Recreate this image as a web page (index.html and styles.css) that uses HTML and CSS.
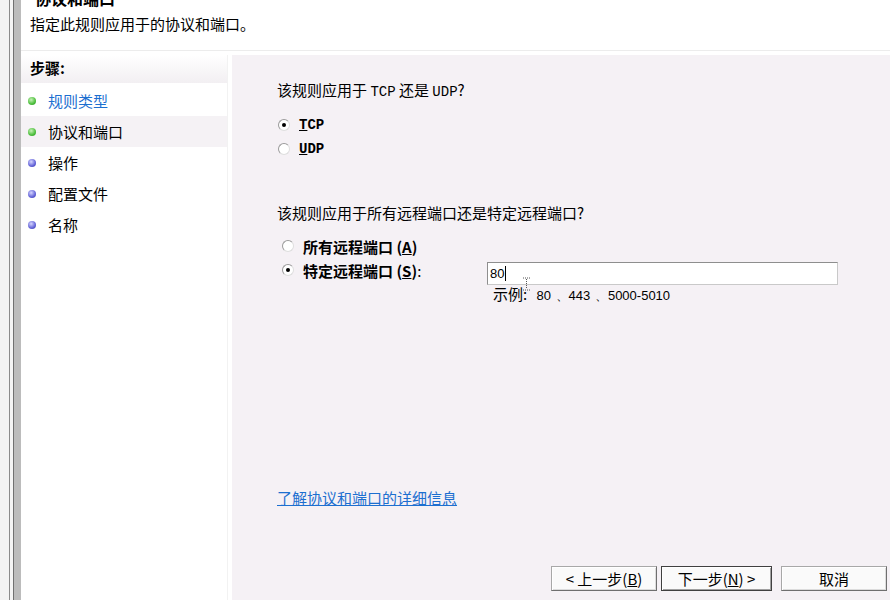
FILE: index.html
```html
<!DOCTYPE html>
<html>
    <head>
        <title>新建入站规则向导 - 协议和端口</title>
        <link rel="stylesheet" href="styles.css">
    </head>
    <body>
        <div class="window">
            <div class="frame-edge">
                <div class="edge-line"></div>
                <div class="edge-bar"></div>
            </div>
            <div class="wizard">
                <div class="header">
                    <div class="title">协议和端口</div>
                    <div class="subtitle">指定此规则应用于的协议和端口。</div>
                </div>
                <div class="body">
                    <div class="steps">
                        <div class="steps-head">步骤:</div>
                        <div class="step first"><span class="dot green"></span><span class="step-link">规则类型</span></div>
                        <div class="step current"><span class="dot green"></span>协议和端口</div>
                        <div class="step"><span class="dot blue"></span>操作</div>
                        <div class="step"><span class="dot blue"></span>配置文件</div>
                        <div class="step"><span class="dot blue"></span>名称</div>
                    </div>
                    <div class="page">
                        <p class="question">该规则应用于 <span class="mono">TCP</span> 还是 <span class="mono">UDP</span>?</p>
                        <div class="options">
                            <label class="option"><span class="radio checked"></span><b class="mono"><u>T</u>CP</b></label>
                            <label class="option"><span class="radio"></span><b class="mono"><u>U</u>DP</b></label>
                        </div>
                        <p class="question second">该规则应用于所有远程端口还是特定远程端口?</p>
                        <div class="options ports">
                            <label class="option"><span class="radio"></span><b>所有远程端口 (<u>A</u>)</b></label>
                            <div class="port-row">
                                <label class="option"><span class="radio checked"></span><b>特定远程端口 (<u>S</u>)</b>:</label>
                                <div class="port-field">
                                    <div class="input">80<span class="caret"></span></div>
                                    <div class="hint">示例: <span class="nums">80 、443 、5000-5010</span></div>
                                    <svg class="ibeam" width="9" height="14" viewBox="0 0 9 14">
                                        <path d="M1 1h3M5 1h3M4.5 2v10M1 13h3M5 13h3" stroke="#555" stroke-width="1" stroke-dasharray="1 1" fill="none"/>
                                    </svg>
                                </div>
                            </div>
                        </div>
                        <a class="more" href="#">了解协议和端口的详细信息</a>
                        <div class="buttons">
                            <button>&lt; 上一步(<u>B</u>)</button>
                            <button class="default">下一步(<u>N</u>) &gt;</button>
                            <button class="cancel">取消</button>
                        </div>
                    </div>
                </div>
            </div>
        </div>
    </body>
</html>
```

FILE: styles.css
```css
body {
    margin: 0;
    background-color: #ffffff;
    font-family: "Noto Sans CJK SC", "Noto Sans", sans-serif;
    font-size: 15px;
    color: #000;
}

.window {
    display: flex;
    width: 890px;
    height: 600px;
    overflow: hidden;
}

/* Left border of the dialog */
.frame-edge {
    display: flex;
    width: 21px;
    background-color: #f4f4f4;
    flex-shrink: 0;
}

.edge-line {
    width: 1px;
    margin-left: 9px;
    background-color: #8c8c8c;
}

.edge-bar {
    width: 7px;
    margin-left: 3px;
    border-left: 1px solid #707070;
    background-color: #bcbcbc;
}

.wizard {
    flex: 1;
    display: flex;
    flex-direction: column;
}

/* Header */
.header {
    height: 51px;
    padding-left: 9px;
    border-bottom: 1px solid #ececec;
    box-sizing: border-box;
}

.title {
    margin-top: -12px;
    margin-left: 5px;
    font-size: 16px;
    font-weight: bold;
    line-height: 20px;
}

.subtitle {
    margin-top: 6px;
    line-height: 20px;
}

.body {
    flex: 1;
    display: flex;
    padding-top: 4px;
}

/* Steps */
.steps {
    width: 206px;
    background-color: #ffffff;
    border-right: 1px solid #f2f2f2;
}

.steps-head {
    height: 28px;
    line-height: 26px;
    padding-left: 9px;
    font-weight: bold;
    background: linear-gradient(#ffffff, #f2eff2);
}

.step {
    display: flex;
    align-items: center;
    height: 31px;
    padding-left: 7px;
}

.step.first {
    margin-top: 2px;
}

.step.current {
    background-color: #f5f2f5;
}

.step-link {
    color: #1c6fd0;
}

.dot {
    width: 8px;
    height: 8px;
    border-radius: 50%;
    margin-right: 12px;
}

.dot.green {
    background: radial-gradient(circle at 40% 35%, #c8f2b8, #4cbf3c 60%, #2f8f2a);
}

.dot.blue {
    background: radial-gradient(circle at 40% 35%, #d6d6ff, #6464d8 60%, #3c3ca8);
}

/* Page */
.page {
    flex: 1;
    display: flex;
    flex-direction: column;
    margin-left: 4px;
    padding: 26px 0 0 45px;
    background-color: #f5f1f5;
}

.question {
    margin: 0;
    line-height: 18px;
}

.question.second {
    margin-top: 43px;
}

.mono {
    font-family: "Liberation Mono", "DejaVu Sans Mono", monospace;
    font-size: 14px;
}

.options {
    margin-top: 12px;
    padding-left: 1px;
}

.options.ports {
    margin-top: 12px;
    padding-left: 5px;
}

.option {
    display: flex;
    align-items: center;
    height: 24px;
}

.option b {
    margin-left: 9px;
}

.radio {
    width: 12px;
    height: 12px;
    border-radius: 50%;
    border: 1px solid #9a9a9a;
    border-right-color: #dedede;
    border-bottom-color: #dedede;
    background-color: #fff;
    box-sizing: border-box;
    position: relative;
}

.radio.checked::after {
    content: "";
    position: absolute;
    left: 3px;
    top: 3px;
    width: 4px;
    height: 4px;
    border-radius: 50%;
    background-color: #000;
}

.port-row {
    display: flex;
    align-items: flex-start;
}

.port-row .option {
    width: 205px;
}

.port-field {
    position: relative;
    margin-top: 4px;
}

.input {
    width: 351px;
    height: 23px;
    line-height: 21px;
    box-sizing: border-box;
    padding-left: 2px;
    border: 1px solid #c9c9c9;
    border-top-color: #8e8e8e;
    border-left-color: #8e8e8e;
    background-color: #fff;
    font-family: "Liberation Sans", sans-serif;
    font-size: 13px;
}

.caret {
    display: inline-block;
    width: 1px;
    height: 15px;
    margin-left: 1px;
    vertical-align: -3px;
    background-color: #000;
}

.hint {
    margin-left: 6px;
    line-height: 18px;
}

.nums {
    margin-left: 6px;
    font-family: "Liberation Sans", sans-serif;
    font-size: 13px;
    word-spacing: 1px;
}

.ibeam {
    position: absolute;
    left: 35px;
    top: 15px;
}

.more {
    margin-top: 182px;
    align-self: flex-start;
    color: #1c6fd0;
}

.buttons {
    margin-top: auto;
    margin-bottom: 9px;
    display: flex;
    padding-left: 274px;
}

button {
    width: 106px;
    height: 25px;
    margin-right: 4px;
    padding: 0;
    font-family: "Noto Sans CJK SC", sans-serif;
    font-size: 15px;
    background-color: #fafafa;
    border: 1px solid #a8a8a8;
    border-right-color: #6f6f6f;
    border-bottom-color: #6f6f6f;
    box-shadow: inset 1px 1px 0 #fff, inset -1px -1px 0 #dcdcdc;
}

button.default {
    width: 111px;
    border: 1px solid #404040;
    box-shadow: inset 1px 1px 0 #fff, inset -1px -1px 0 #a0a0a0, inset 0 0 0 1px #d8d8d8;
}

button.cancel {
    margin-left: 5px;
    width: 106px;
}
```
